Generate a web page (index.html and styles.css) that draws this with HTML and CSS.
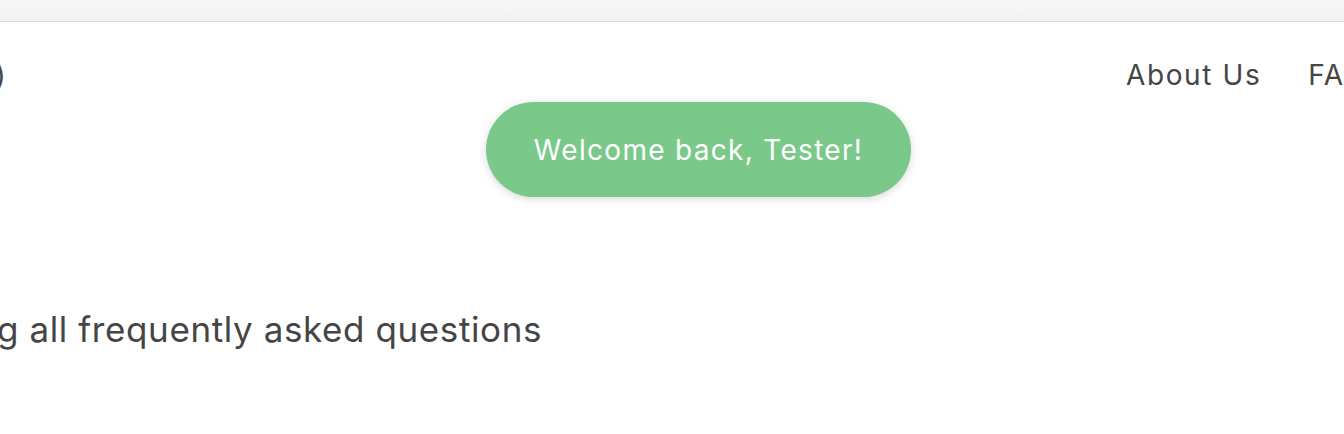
FILE: index.html
```html
<!DOCTYPE html>
<html lang="en">
<head>
<meta charset="utf-8">
<title>FAQ</title>
<link rel="stylesheet" href="styles.css">
</head>
<body>
  <div class="chrome"></div>
  <header class="header">
    <div class="brand"><span class="brand-text">Cart (0)</span></div>
    <nav class="nav">
      <a class="nav-link" href="#">About Us</a>
      <a class="nav-link" href="#">FAQ</a>
    </nav>
  </header>
  <main class="main">
    <p class="lead"><span class="lead-text">Showing all frequently asked questions</span></p>
  </main>
  <div class="toast">Welcome back, Tester!</div>
</body>
</html>
```

FILE: styles.css
```css
html, body {
  margin: 0;
  padding: 0;
  width: 1344px;
  height: 434px;
  overflow: hidden;
  background: #ffffff;
  font-family: Inter, "Noto Sans", sans-serif;
  color: #454545;
}
.chrome {
  height: 21px;
  background: linear-gradient(#f7f7f7, #f1f1f1);
  border-bottom: 1px solid #d9d9d9;
}
.header {
  display: flex;
  align-items: center;
  height: 106px;
  white-space: nowrap;
}
.brand {
  flex: none;
  width: 7px;
  overflow: hidden;
  display: flex;
  justify-content: flex-end;
  font-size: 28px;
  line-height: 34px;
  letter-spacing: 1.2px;
}
.brand-text { flex: none; }
.nav {
  display: flex;
  gap: 47px;
  margin-left: 1119px;
  font-size: 28px;
  line-height: 34px;
  letter-spacing: 1.6px;
  flex: none;
}
.nav-link {
  color: #454545;
  text-decoration: none;
}
.main {
  padding-top: 180px;
}
.lead {
  margin: 0;
  width: 542px;
  overflow: hidden;
  display: flex;
  justify-content: flex-end;
  white-space: nowrap;
  font-size: 35px;
  line-height: 42px;
  letter-spacing: 0.6px;
}
.lead-text { flex: none; }
.toast {
  position: absolute;
  left: 486px;
  top: 102px;
  width: 425px;
  height: 95px;
  box-sizing: border-box;
  border-radius: 48px;
  background: #7ac98a;
  color: #ffffff;
  font-size: 28px;
  letter-spacing: 1.3px;
  display: flex;
  align-items: center;
  justify-content: center;
  box-shadow: 0 2px 8px rgba(0, 0, 0, 0.15);
}
```
